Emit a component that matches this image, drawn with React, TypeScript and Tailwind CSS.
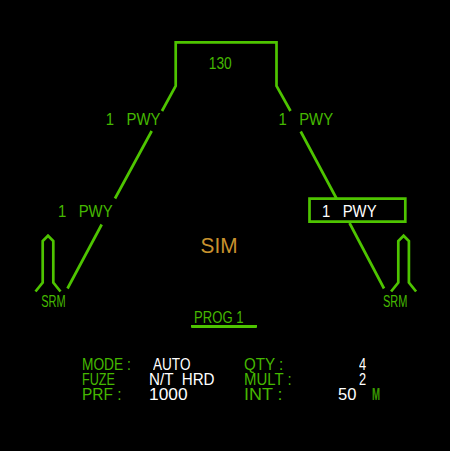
import type { ReactNode } from "react";

type CellProps = { className?: string; children: ReactNode };

function Cell({ className = "", children }: CellProps) {
  return (
    <div className="h-[15px] whitespace-pre">
      <span className={`inline-block origin-left ${className}`}>{children}</span>
    </div>
  );
}

function Station({ x, y, className = "fill-[#45b800]" }: { x: number; y: number; className?: string }) {
  return (
    <text
      x={x}
      y={y}
      textLength="54.6"
      lengthAdjust="spacingAndGlyphs"
      className={`whitespace-pre text-[15.6px] ${className}`}
    >
      {"1   PWY"}
    </text>
  );
}

function Missile({ x }: { x: number }) {
  return <path d={`M${x - 12.5} 291.5 L${x - 5.3} 282.5 V241 L${x} 235.7 L${x + 5.3} 241 V282.5 L${x + 12.5} 291.5`} />;
}

function WingDiagram() {
  return (
    <svg width="450" height="310" viewBox="0 0 450 310" className="block">
      <g className="fill-none stroke-[#4ec400]" strokeWidth="2.7">
        <path d="M162 111 L175.7 86 V42.3 H276.5 V86 L290.5 111" />
        <path d="M151.7 131 L115 198.5 M101.7 224.5 L67.5 288.5" />
        <path d="M300.7 131.5 L336.5 198.5 M349.5 223 L384 288.5" />
        <path d="M309.5 198.7 H405.3 V221.6 H309.5 Z" />
        <Missile x={48} />
        <Missile x={403.6} />
      </g>
      <text x="208.8" y="69" className="fill-[#45b800] text-[15.6px]" textLength="23" lengthAdjust="spacingAndGlyphs">
        130
      </text>
      <Station x={105.8} y={125} />
      <Station x={278.5} y={125} />
      <Station x={58} y={216.7} />
      <Station x={322} y={216.7} className="fill-white" />
      <text x="200.5" y="253.3" className="fill-[#c8922e] text-[21.5px]" textLength="37" lengthAdjust="spacingAndGlyphs">
        SIM
      </text>
      <g className="fill-[#45b800] text-[15.6px]">
        <text x="41.2" y="307.4" textLength="24.4" lengthAdjust="spacingAndGlyphs">SRM</text>
        <text x="382.9" y="307.4" textLength="24.4" lengthAdjust="spacingAndGlyphs">SRM</text>
      </g>
    </svg>
  );
}

export default function App() {
  return (
    <main className="h-[451px] w-[450px] overflow-hidden bg-black font-['Liberation_Sans',Arial,sans-serif] text-[15.6px] leading-[15px] text-[#45b800]">
      <WingDiagram />
      <div className="ml-[190.5px] h-[18px] w-[66px] rounded-b-[1px] border-b-3 border-[#4ec400] pl-[3.5px]">
        <Cell className="scale-x-[0.84]">PROG 1</Cell>
      </div>
      <section className="grid grid-cols-[67.5px_94.5px_94.5px_41px] pt-[29px] pl-[81.5px]">
        <div>
          <Cell className="scale-x-[0.88]">MODE :</Cell>
          <Cell className="scale-x-[0.81]">FUZE</Cell>
          <Cell className="scale-x-[0.99]">PRF :</Cell>
        </div>
        <div className="text-white">
          <Cell className="ml-[3.5px] scale-x-[0.87]">AUTO</Cell>
          <Cell className="scale-x-[0.975]">{"N/T  HRD"}</Cell>
          <Cell className="scale-x-[1.11]">1000</Cell>
        </div>
        <div>
          <Cell className="scale-x-[0.97]">QTY :</Cell>
          <Cell className="scale-x-[0.96]">MULT :</Cell>
          <Cell className="scale-x-[1.15]">INT :</Cell>
        </div>
        <div className="text-white">
          <Cell className="ml-[20.5px] scale-x-[0.82]">4</Cell>
          <Cell className="ml-[20.5px] scale-x-[0.82]">2</Cell>
          <div className="flex">
            <div className="w-[33.5px] shrink-0">
              <Cell className="scale-x-[1.06]">50</Cell>
            </div>
            <Cell className="scale-x-[0.62] font-bold text-[#3a9a00]">M</Cell>
          </div>
        </div>
      </section>
    </main>
  );
}
